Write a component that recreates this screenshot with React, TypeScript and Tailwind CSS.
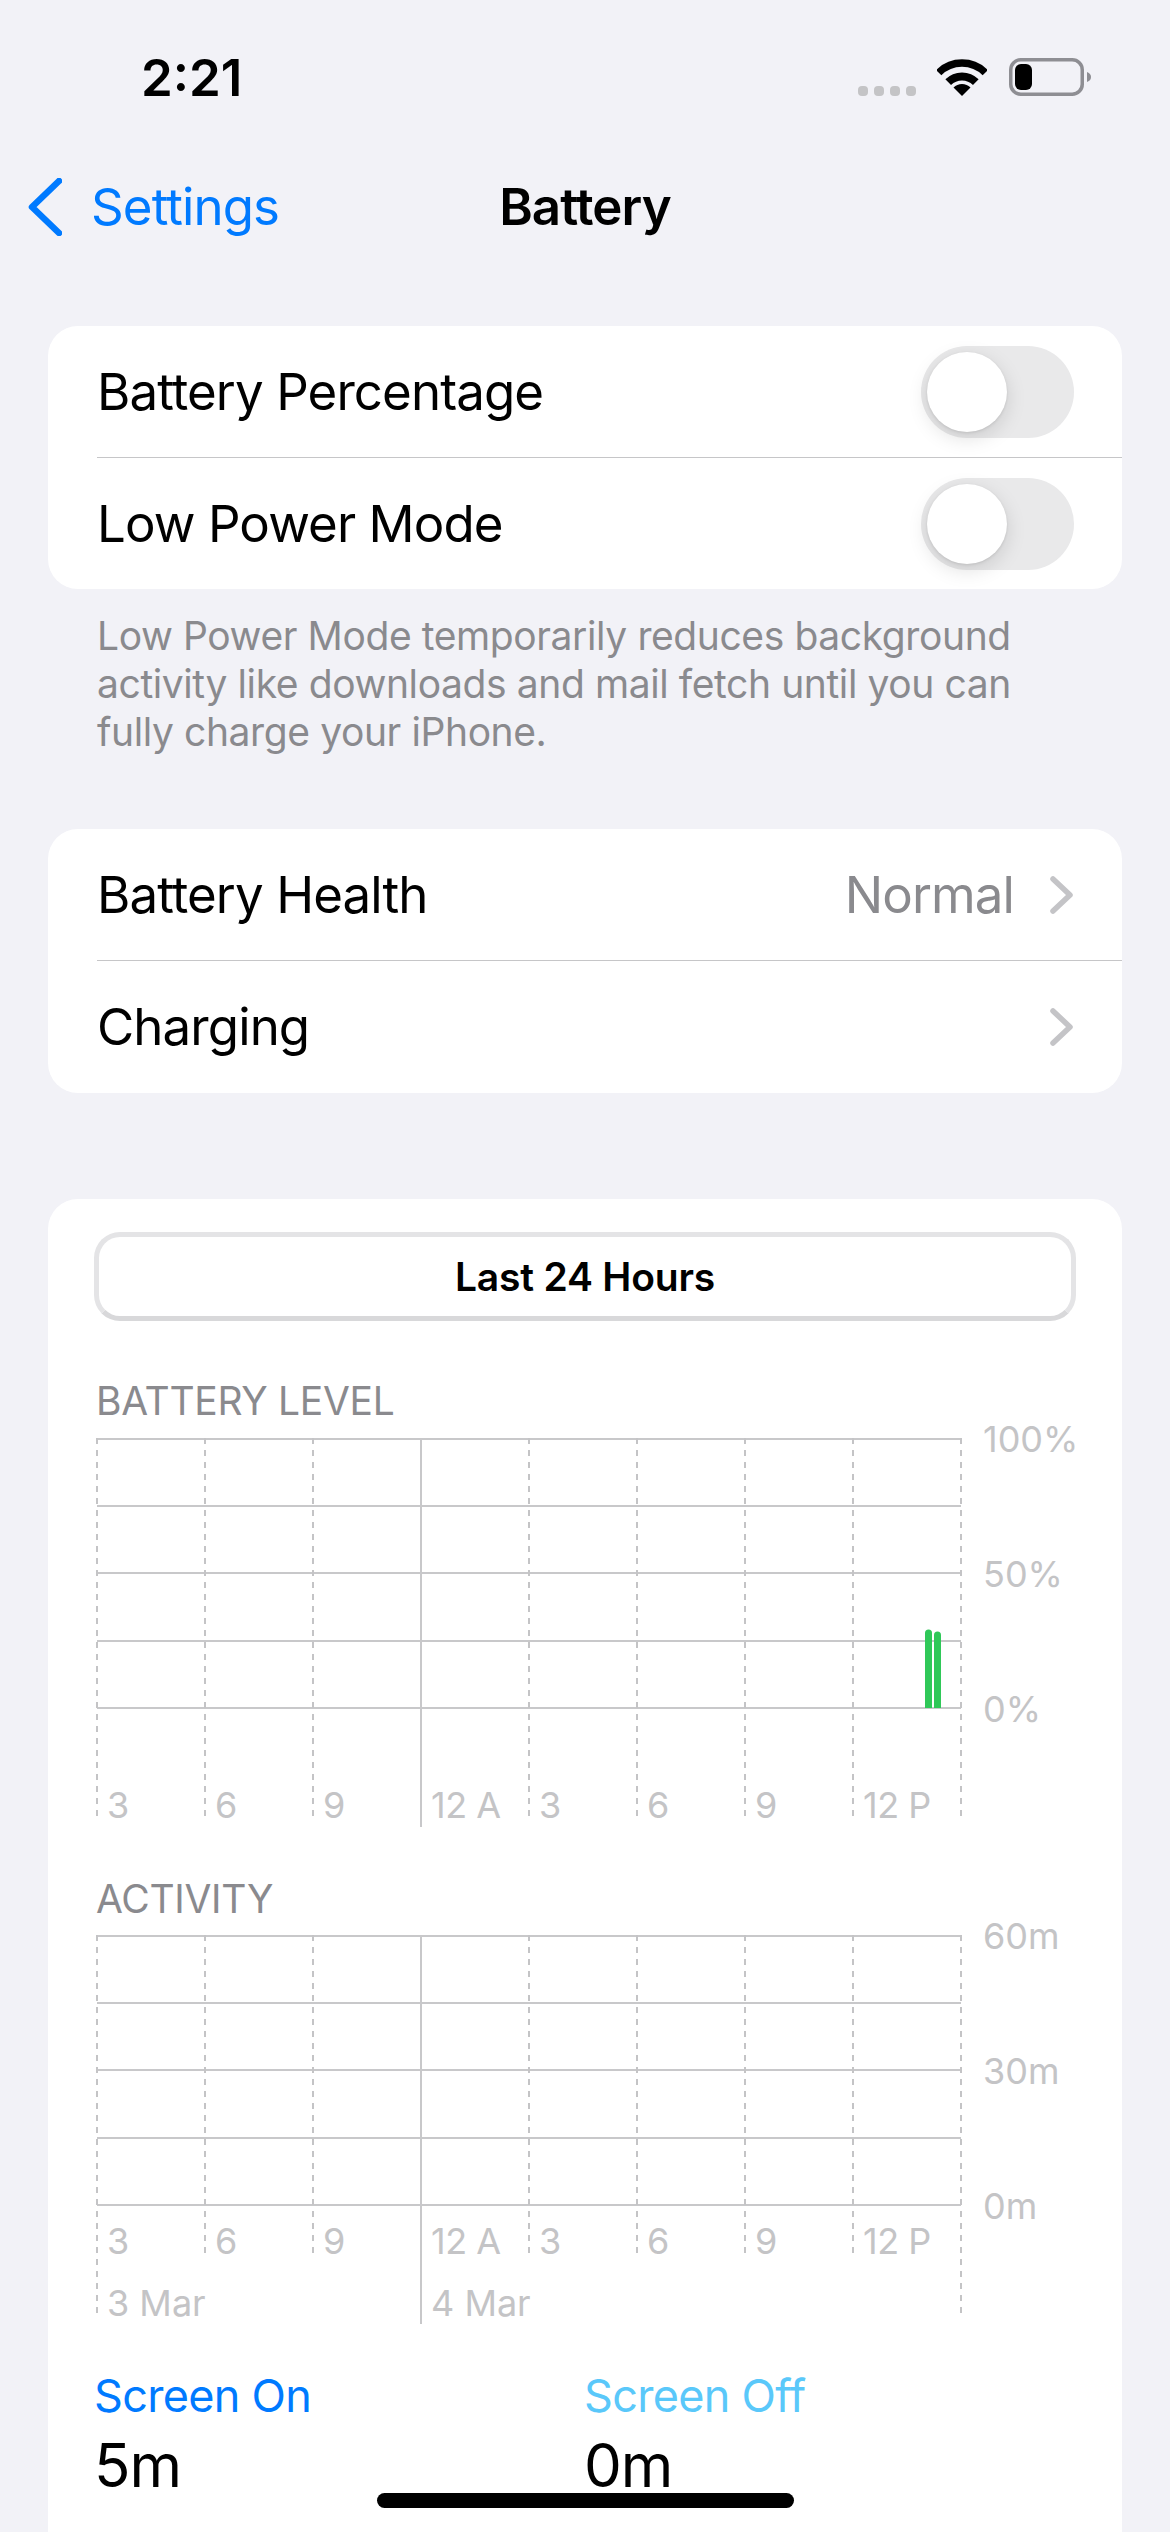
import React from "react";

const hours = ["3", "6", "9", "12 A", "3", "6", "9", "12 P"];
const gridX = [1, 109, 217, 433, 541, 649, 757, 865];

const Row = ({ label, children, divider }: { label: string; children?: React.ReactNode; divider?: boolean }) => {
  return (
    <div className="h-[132px] pl-[49px] flex">
      <div className={`flex-1 flex items-center justify-between pr-[48px] ${divider ? "border-b border-[#c6c6c8]" : ""}`}>
        <p className="text-[51px] leading-[60px] text-black tracking-[-0.9px]">{label}</p>
        {children}
      </div>
    </div>
  );
};

const Toggle = () => {
  return (
    <div className="w-[153px] h-[92px] rounded-full bg-[#e9e9ea] p-[6px]">
      <div className="w-[80px] h-[80px] rounded-full bg-white shadow-[0_6px_20px_rgba(0,0,0,0.13),0_1px_3px_rgba(0,0,0,0.1)]" />
    </div>
  );
};

const Disclosure = ({ value }: { value?: string }) => {
  return (
    <div className="flex items-center gap-[36px]">
      {value && <p className="text-[51px] leading-[60px] text-[#8a8a8e] tracking-[-0.9px]">{value}</p>}
      <svg width="24" height="38" viewBox="0 0 24 38" fill="none">
        <path d="M3 3L20 19L3 35" stroke="#c4c4c7" strokeWidth="5.5" strokeLinecap="round" strokeLinejoin="round" />
      </svg>
    </div>
  );
};

const Chart = ({ top, dashEnds, yLabels, labelTop, bars, dates }: {
  top: number;
  dashEnds: number[];
  yLabels: string[];
  labelTop: string;
  bars?: boolean;
  dates?: boolean;
}) => {
  return (
    <div className="flex ml-[2px]">
      <div className="relative w-[866px] h-[389px] text-[#c4c4c6] text-[36px] leading-[40px]">
        <svg className="absolute inset-0" width="866" height="389" viewBox="0 0 866 389" fill="none">
          {[1, 68, 135, 203, 270].map((y) => (
            <path key={y} d={`M1 ${y}H865`} stroke="#c8c8ca" strokeWidth="2" />
          ))}
          {gridX.map((x, i) => (
            <path key={x} d={`M${x} 0V${dashEnds[i]}`} stroke="#c4c4c6" strokeWidth="2" strokeDasharray="6 6" />
          ))}
          <path d="M325 0V389" stroke="#c8c8ca" strokeWidth="2" />
          {bars && (
            <>
              <path d={`M829 270V${top + 3}a3.5 3.5 0 0 1 7 0V270Z`} fill="#2fc858" />
              <path d={`M838 270V${top + 5}a3.5 3.5 0 0 1 7 0V270Z`} fill="#2fc858" />
            </>
          )}
        </svg>
        <div className={`relative ${labelTop}`}>
          <div className="grid grid-cols-[repeat(8,108px)]">
            {hours.map((h, i) => (
              <span key={i} className="pl-[11px] tracking-[-0.5px]">{h}</span>
            ))}
          </div>
          {dates && (
            <div className="grid grid-cols-[repeat(8,108px)] mt-[22px]">
              <span className="pl-[11px] col-span-3">3 Mar</span>
              <span className="pl-[11px] col-span-3">4 Mar</span>
            </div>
          )}
        </div>
      </div>
      <div className="ml-[21px] -mt-[19px] flex flex-col gap-[95px] text-[#c4c4c6] text-[36px] leading-[40px]">
        {yLabels.map((l) => (
          <span key={l}>{l}</span>
        ))}
      </div>
    </div>
  );
};

const App = () => {
  return (
    <div className="relative w-[1170px] h-[2532px] overflow-hidden bg-[#f2f2f7] font-[Inter,sans-serif]">
      {/* status bar */}
      <div className="h-[155px] flex justify-between pl-[141px] pr-[79px]">
        <p className="mt-[50px] text-[51px] leading-[56px] font-semibold text-black">2:21</p>
        <div className="flex items-start mt-[58px]">
          <div className="flex gap-[6px] mt-[28px]">
            <div className="w-[10px] h-[10px] rounded-[4px] bg-[#c4c4c6]" />
            <div className="w-[10px] h-[10px] rounded-[4px] bg-[#c4c4c6]" />
            <div className="w-[10px] h-[10px] rounded-[4px] bg-[#c4c4c6]" />
            <div className="w-[10px] h-[10px] rounded-[4px] bg-[#c4c4c6]" />
          </div>
          <svg className="ml-[21px] mt-[1px]" width="50" height="37" viewBox="0 0 50 37" fill="none">
            <path d="M1.7 13.7A33 33 0 0 1 48.3 13.7" stroke="black" strokeWidth="7.5" />
            <path d="M11.2 23.2A19.5 19.5 0 0 1 38.8 23.2" stroke="black" strokeWidth="8" />
            <path d="M25 37L16.5 28.5A12 12 0 0 1 33.5 28.5Z" fill="black" />
          </svg>
          <svg className="ml-[22px]" width="82" height="38" viewBox="0 0 82 38" fill="none">
            <rect x="1.75" y="1.75" width="71.5" height="34.5" rx="10" stroke="#8e8e93" strokeWidth="3.5" />
            <rect x="6" y="6" width="17" height="26" rx="6" fill="black" />
            <path d="M78 14C81 15 82 17 82 19C82 21 81 23 78 24Z" fill="#8e8e93" />
          </svg>
        </div>
      </div>

      {/* nav bar */}
      <div className="h-[103px] grid grid-cols-[1fr_auto_1fr] items-center">
        <div className="flex items-center pl-[28px]">
          <svg width="34" height="58" viewBox="0 0 34 58" fill="none">
            <path d="M31 3L4 29L31 55" stroke="#007aff" strokeWidth="6.5" strokeLinecap="round" strokeLinejoin="round" />
          </svg>
          <p className="ml-[29px] text-[51px] leading-[60px] text-[#007aff] tracking-[-0.9px]">Settings</p>
        </div>
        <p className="text-[51px] leading-[60px] font-semibold text-black tracking-[-0.9px]">Battery</p>
        <div />
      </div>

      <div className="mt-[68px] mx-[48px]">
        <div className="bg-white rounded-[30px] h-[263px] overflow-hidden">
          <Row label="Battery Percentage" divider><Toggle /></Row>
          <Row label="Low Power Mode"><Toggle /></Row>
        </div>
        <p className="mt-[23px] pl-[49px] pr-[40px] text-[39px] leading-[48px] text-[#8a8a8e] tracking-[-0.4px]">
          Low Power Mode temporarily reduces background activity like downloads and mail fetch until you can fully charge your iPhone.
        </p>

        <div className="mt-[73px] bg-white rounded-[30px] h-[264px] overflow-hidden">
          <Row label="Battery Health" divider><Disclosure value="Normal" /></Row>
          <Row label="Charging"><Disclosure /></Row>
        </div>

        <div className="mt-[106px] bg-white rounded-t-[30px] h-[1400px] pl-[46px] pt-[33px]">
          <div className="w-[982px] h-[89px] rounded-[26px] border-[5px] border-[#e4e4e6] border-b-[#d8d8da] flex items-center justify-center">
            <p className="text-[39px] leading-[48px] font-semibold text-black tracking-[-0.2px]">Last 24 Hours</p>
          </div>

          <p className="mt-[56px] pl-[2px] text-[39px] leading-[48px] text-[#8a8a8e] tracking-[-0.3px]">BATTERY LEVEL</p>
          <div className="mt-[13px]">
            <Chart
              top={192}
              bars
              dashEnds={[384, 384, 384, 384, 384, 384, 384, 384]}
              yLabels={["100%", "50%", "0%"]}
              labelTop="pt-[347px]"
            />
          </div>

          <p className="mt-[48px] pl-[2px] text-[39px] leading-[48px] text-[#8a8a8e] tracking-[-0.3px]">ACTIVITY</p>
          <div className="mt-[12px]">
            <Chart
              top={0}
              dates
              dashEnds={[384, 323, 323, 323, 323, 323, 323, 384]}
              yLabels={["60m", "30m", "0m"]}
              labelTop="pt-[286px]"
            />
          </div>

          <div className="mt-[45px] flex">
            <div className="w-[490px]">
              <p className="text-[45px] leading-[54px] text-[#007aff] tracking-[-0.7px]">Screen On</p>
              <p className="mt-[6px] text-[60px] leading-[72px] text-black tracking-[-1px]">5m</p>
            </div>
            <div>
              <p className="text-[45px] leading-[54px] text-[#5ac8fa] tracking-[-0.7px]">Screen Off</p>
              <p className="mt-[6px] text-[60px] leading-[72px] text-black tracking-[-1px]">0m</p>
            </div>
          </div>
        </div>
      </div>

      {/* home indicator */}
      <div className="absolute left-[377px] top-[2493px] w-[417px] h-[15px] rounded-full bg-black" />
    </div>
  );
};

export default App;
